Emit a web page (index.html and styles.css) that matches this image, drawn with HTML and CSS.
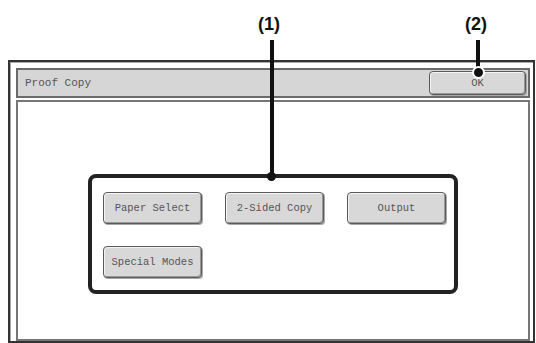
FILE: index.html
```
<!DOCTYPE html>
<html>
<head>
<title>Proof Copy</title>
<link rel="stylesheet" href="styles.css">
</head>
<body>
<div class="page">
    <div class="frame">
        <div class="titlebar">
            <span class="title">Proof Copy</span>
            <button class="btn btn-ok">OK</button>
        </div>
        <div class="content">
            <div class="btngrid">
                <button class="btn">Paper Select</button>
                <button class="btn">2-Sided Copy</button>
                <button class="btn">Output</button>
                <button class="btn">Special Modes</button>
            </div>
        </div>
    </div>

    <!-- callouts -->
    <div class="label label1">(1)</div>
    <div class="label label2">(2)</div>
    <div class="lead lead1"></div>
    <div class="lead lead2"></div>
    <div class="bracket"></div>
    <div class="dot dot1"></div>
    <div class="dot dot2"></div>
</div>
</body>
</html>
```
FILE: styles.css
```
html, body {
    margin: 0;
    padding: 0;
    background: #fff;
}
.page {
    position: relative;
    width: 536px;
    height: 343px;
    overflow: hidden;
    padding-top: 60px;
    box-sizing: border-box;
}
.frame {
    margin-left: 8px;
    width: 527px;
    height: 283px;
    border: 2px solid #333;
    box-shadow: inset 1px 1px 0 #aaa;
    box-sizing: border-box;
    padding: 6px 3px 0 6px;
}
.titlebar {
    display: flex;
    align-items: center;
    justify-content: space-between;
    height: 26px;
    border: 2px solid #6a6a6a;
    background: #d6d6d6;
    padding: 0 2px 0 7px;
}
.title {
    font-family: "Courier New", "Nimbus Mono PS", FreeMono, "Liberation Mono", monospace;
    font-size: 11px;
    color: #555;
}
.content {
    margin-top: 2px;
    height: 241px;
    border: 2px solid #777;
    background: #fff;
    padding: 90px 0 0 85px;
    box-sizing: border-box;
}
.btngrid {
    display: grid;
    grid-template-columns: repeat(3, 99px);
    grid-auto-rows: 32px;
    column-gap: 23px;
    row-gap: 22px;
}
.btn {
    font-family: "Courier New", "Nimbus Mono PS", FreeMono, "Liberation Mono", monospace;
    font-weight: normal;
    font-size: 10.5px;
    color: #555;
    background: #d8d8d8;
    border: 1px solid #5a5a5a;
    border-radius: 4px;
    box-shadow: inset 1px 1px 0 #f4f4f4, inset -1px -1px 0 #999, 1px 1px 0 #aaa;
    padding: 0;
}
.btn-ok {
    width: 97px;
    height: 24px;
}
.label {
    position: absolute;
    top: 14px;
    font-family: "Liberation Sans", Arial, sans-serif;
    font-weight: bold;
    font-size: 18px;
    color: #111;
}
.label1 { left: 258px; }
.label2 { left: 465px; }
.lead {
    position: absolute;
    width: 4px;
    background: #111;
}
.lead1 { left: 270px; top: 40px; height: 136px; }
.lead2 { left: 476px; top: 40px; height: 32px; }
.bracket {
    position: absolute;
    left: 88px;
    top: 174px;
    width: 370px;
    height: 120px;
    border: 4px solid #222;
    border-radius: 8px;
    box-sizing: border-box;
}
.dot {
    position: absolute;
    width: 9px;
    height: 9px;
    border-radius: 50%;
    background: #111;
}
.dot1 { left: 267px; top: 172px; }
.dot2 { left: 472px; top: 66px; border: 2px solid #fff; }
```
